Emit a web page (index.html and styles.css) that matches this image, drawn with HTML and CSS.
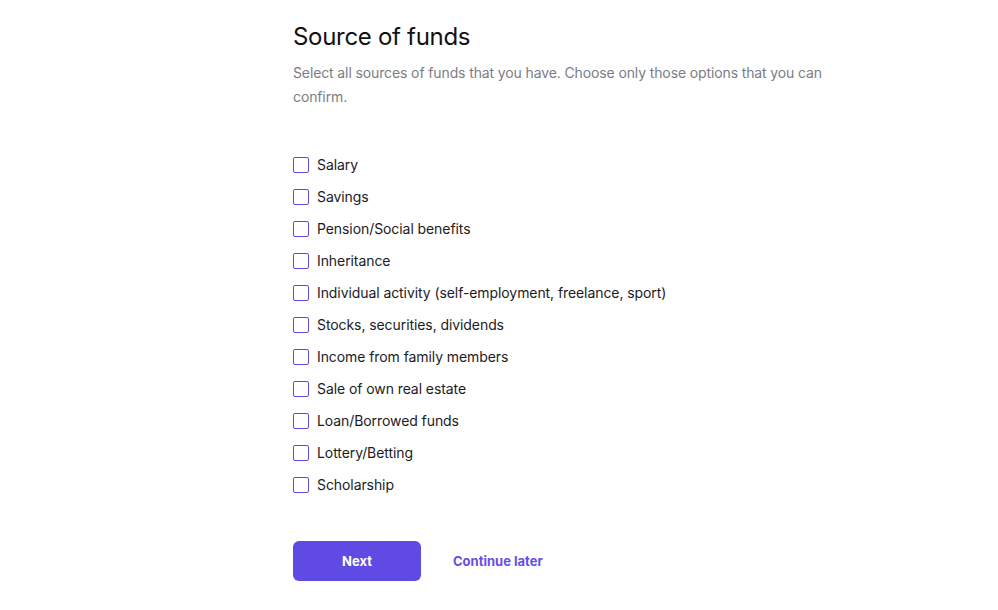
FILE: index.html
```html
<!DOCTYPE html>
<html lang="en">
<head>
<meta charset="utf-8">
<link rel="stylesheet" href="styles.css">
</head>
<body>
<main class="page">
  <h1 class="title">Source of funds</h1>
  <p class="subtitle">Select all sources of funds that you have. Choose only those options that you can confirm.</p>
  <ul class="options">
    <li class="option"><span class="box"></span><span class="label">Salary</span></li>
    <li class="option"><span class="box"></span><span class="label">Savings</span></li>
    <li class="option"><span class="box"></span><span class="label">Pension/Social benefits</span></li>
    <li class="option"><span class="box"></span><span class="label">Inheritance</span></li>
    <li class="option"><span class="box"></span><span class="label">Individual activity (self-employment, freelance, sport)</span></li>
    <li class="option"><span class="box"></span><span class="label">Stocks, securities, dividends</span></li>
    <li class="option"><span class="box"></span><span class="label">Income from family members</span></li>
    <li class="option"><span class="box"></span><span class="label">Sale of own real estate</span></li>
    <li class="option"><span class="box"></span><span class="label">Loan/Borrowed funds</span></li>
    <li class="option"><span class="box"></span><span class="label">Lottery/Betting</span></li>
    <li class="option"><span class="box"></span><span class="label">Scholarship</span></li>
  </ul>
  <div class="actions">
    <button class="btn-next">Next</button>
    <a class="link-later">Continue later</a>
  </div>
</main>
</body>
</html>
```
FILE: styles.css
```css
html, body {
  margin: 0;
  padding: 0;
  background: #ffffff;
}
body {
  font-family: Inter, "Noto Sans", sans-serif;
  color: #1b1b1f;
}
.page {
  padding: 22px 0 0 293px;
  width: 540px;
}
.title {
  margin: 0;
  font-size: 24px;
  font-weight: 400;
  line-height: 30px;
  color: #111114;
  letter-spacing: -0.3px;
}
.subtitle {
  margin: 9px 0 0;
  font-size: 14px;
  line-height: 24px;
  color: #7c7c86;
  letter-spacing: -0.12px;
}
.options {
  list-style: none;
  margin: 46px 0 0;
  padding: 0;
  display: flex;
  flex-direction: column;
  gap: 12px;
}
.option {
  display: flex;
  align-items: center;
  gap: 8px;
  height: 20px;
}
.box {
  width: 14px;
  height: 14px;
  border: 1.5px solid #6248e6;
  border-radius: 2px;
  box-sizing: content-box;
  flex: none;
}
.label {
  font-size: 14px;
  line-height: 20px;
  color: #1b1b1f;
  letter-spacing: -0.08px;
}
.actions {
  display: flex;
  align-items: center;
  gap: 32px;
  margin-top: 46px;
}
.btn-next {
  width: 128px;
  height: 40px;
  border: none;
  border-radius: 6px;
  background: #5f4be3;
  color: #ffffff;
  font-family: inherit;
  font-size: 13px;
  font-weight: 700;
  cursor: pointer;
}
.link-later {
  font-size: 13px;
  font-weight: 700;
  color: #654fe8;
  cursor: pointer;
}
```
